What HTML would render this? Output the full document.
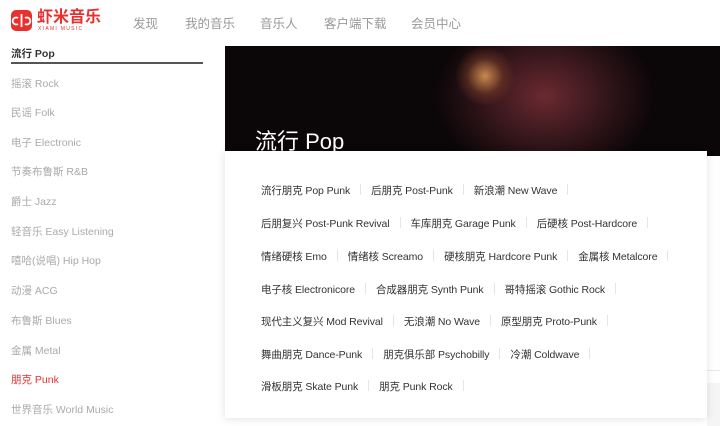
<!DOCTYPE html>
<html><head><meta charset="utf-8"><style>
*{margin:0;padding:0;box-sizing:border-box}
body{width:720px;height:426px;overflow:hidden;background:#fff;font-family:"Liberation Sans","Noto Sans CJK SC",sans-serif;position:relative}
.logo{position:absolute;left:11px;top:10px;width:21px;height:21px;background:#e8312f;border-radius:5px}
.lt{position:absolute;left:37px;top:9px;color:#e8312f;font-size:16px;font-weight:bold;line-height:18px}
.ls{position:absolute;left:38px;top:26px;color:#e8312f;font-size:5px;letter-spacing:1.3px}
.nav{position:absolute;top:13px;font-size:12.5px;color:#999}
.side{position:absolute;left:11px;font-size:10.5px;color:#aaa}
.banner{position:absolute;left:225px;top:46px;width:495px;height:110px;background:radial-gradient(circle 30px at 260px 30px,#c98a50 0%,rgba(120,60,40,.5) 60%,transparent 100%),radial-gradient(ellipse 130px 100px at 320px 50px,#6a2a30 0%,#2a1216 55%,#0b0608 85%),#000}
.popup{position:absolute;left:225px;top:151px;width:482px;height:267px;background:#fff;box-shadow:0 1px 8px rgba(0,0,0,.12)}
.row{position:absolute;left:36px;font-size:10.5px;color:#333;white-space:nowrap;letter-spacing:-0.1px}
.row span{display:inline-block}
.row i{display:inline-block;width:1px;height:11px;background:#e5e5e5;margin:0 10px;vertical-align:-1px}
</style></head><body>
<div class="logo"><svg width="21" height="21" viewBox="0 0 21 21"><path d="M10.5 4v13M7 8a3.5 3.5 0 1 0 0 6M14 8a3.5 3.5 0 1 1 0 6" stroke="#fff" stroke-width="1.8" fill="none"/></svg></div>
<div class="lt">虾米音乐</div>
<div class="ls">XIAMI MUSIC</div>
<div class="nav" style="left:133px">发现</div>
<div class="nav" style="left:185px">我的音乐</div>
<div class="nav" style="left:260px">音乐人</div>
<div class="nav" style="left:324px">客户端下载</div>
<div class="nav" style="left:411px">会员中心</div>
<div class="side" style="top:46px;color:#333;font-weight:bold">流行 Pop</div>
<div style="position:absolute;left:11px;top:62px;width:192px;height:2px;background:#555"></div>
<div class="side" style="top:76px">摇滚 Rock</div>
<div class="side" style="top:105px">民谣 Folk</div>
<div class="side" style="top:135px">电子 Electronic</div>
<div class="side" style="top:164px">节奏布鲁斯 R&amp;B</div>
<div class="side" style="top:194px">爵士 Jazz</div>
<div class="side" style="top:224px">轻音乐 Easy Listening</div>
<div class="side" style="top:253px">嘻哈(说唱) Hip Hop</div>
<div class="side" style="top:283px">动漫 ACG</div>
<div class="side" style="top:313px">布鲁斯 Blues</div>
<div class="side" style="top:343px">金属 Metal</div>
<div class="side" style="top:372px;color:#e8312f">朋克 Punk</div>
<div class="side" style="top:402px">世界音乐 World Music</div>
<div class="banner"></div>
<div style="position:absolute;left:255px;top:124px;color:#fff;font-size:22px">流行 Pop</div>
<div style="position:absolute;left:707px;top:370px;width:13px;height:1px;background:#e8e8e8"></div>
<div style="position:absolute;left:707px;top:383px;width:13px;height:43px;background:#f5f5f5"></div>
<div class="popup">
<div class="row" style="top:32px"><span>流行朋克 Pop Punk</span><i></i><span>后朋克 Post-Punk</span><i></i><span>新浪潮 New Wave</span><i></i></div>
<div class="row" style="top:65px"><span>后朋复兴 Post-Punk Revival</span><i></i><span>车库朋克 Garage Punk</span><i></i><span>后硬核 Post-Hardcore</span><i></i></div>
<div class="row" style="top:98px"><span>情绪硬核 Emo</span><i></i><span>情绪核 Screamo</span><i></i><span>硬核朋克 Hardcore Punk</span><i></i><span>金属核 Metalcore</span><i></i></div>
<div class="row" style="top:131px"><span>电子核 Electronicore</span><i></i><span>合成器朋克 Synth Punk</span><i></i><span>哥特摇滚 Gothic Rock</span><i></i></div>
<div class="row" style="top:163px"><span>现代主义复兴 Mod Revival</span><i></i><span>无浪潮 No Wave</span><i></i><span>原型朋克 Proto-Punk</span><i></i></div>
<div class="row" style="top:196px"><span>舞曲朋克 Dance-Punk</span><i></i><span>朋克俱乐部 Psychobilly</span><i></i><span>冷潮 Coldwave</span><i></i></div>
<div class="row" style="top:228px"><span>滑板朋克 Skate Punk</span><i></i><span>朋克 Punk Rock</span><i></i></div>
</div>
</body></html>
